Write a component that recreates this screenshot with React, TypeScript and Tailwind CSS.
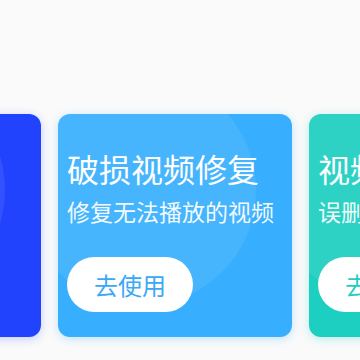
const cards = [
  {
    id: 1,
    title: "视频压缩",
    desc: "压缩视频大小",
    bg: "bg-[#2243fe]",
    btn: "text-[#2243fe]",
    shadow: "shadow-[0_2px_10px_rgba(34,67,254,0.25)]",
  },
  {
    id: 2,
    title: "破损视频修复",
    desc: "修复无法播放的视频",
    bg: "bg-[#37affe]",
    btn: "text-[#3aa8f6]",
    shadow: "shadow-[0_2px_10px_rgba(55,175,254,0.3)]",
  },
  {
    id: 3,
    title: "视频恢复",
    desc: "误删视频一键找回",
    bg: "bg-[#1ccfc0]",
    btn: "text-[#1ccfc0]",
    shadow: "shadow-[0_2px_10px_rgba(28,207,192,0.3)]",
  },
];

export default function App() {
  return (
    <div
      className="w-[360px] h-[360px] overflow-hidden bg-[#fafafa] pt-[114px]"
      style={{ fontFamily: '"Noto Sans CJK SC", "Noto Sans", sans-serif' }}
    >
      <div className="flex gap-[17px] ml-[-193px]">
        {cards.map((card) => (
          <div
            key={card.id}
            className={`relative shrink-0 w-[234px] h-[223px] rounded-[12px] overflow-hidden ${card.bg} ${card.shadow}`}
          >
            {/* soft decorative circle */}
            <div className="absolute left-[-34px] top-[-40px] w-[232px] h-[232px] rounded-full bg-white/[0.08]" />
            <div className="relative flex flex-col pl-[9px] pt-[32px]">
              <h2 className="text-[32px] leading-[44px] text-white font-normal whitespace-nowrap">
                {card.title}
              </h2>
              <p className="mt-[5px] text-[23px] leading-[32px] text-white/95 whitespace-nowrap">
                {card.desc}
              </p>
              <button
                className={`mt-[30px] w-[126px] h-[55px] rounded-full bg-white text-[24px] ${card.btn}`}
              >
                去使用
              </button>
            </div>
          </div>
        ))}
      </div>
    </div>
  );
}
